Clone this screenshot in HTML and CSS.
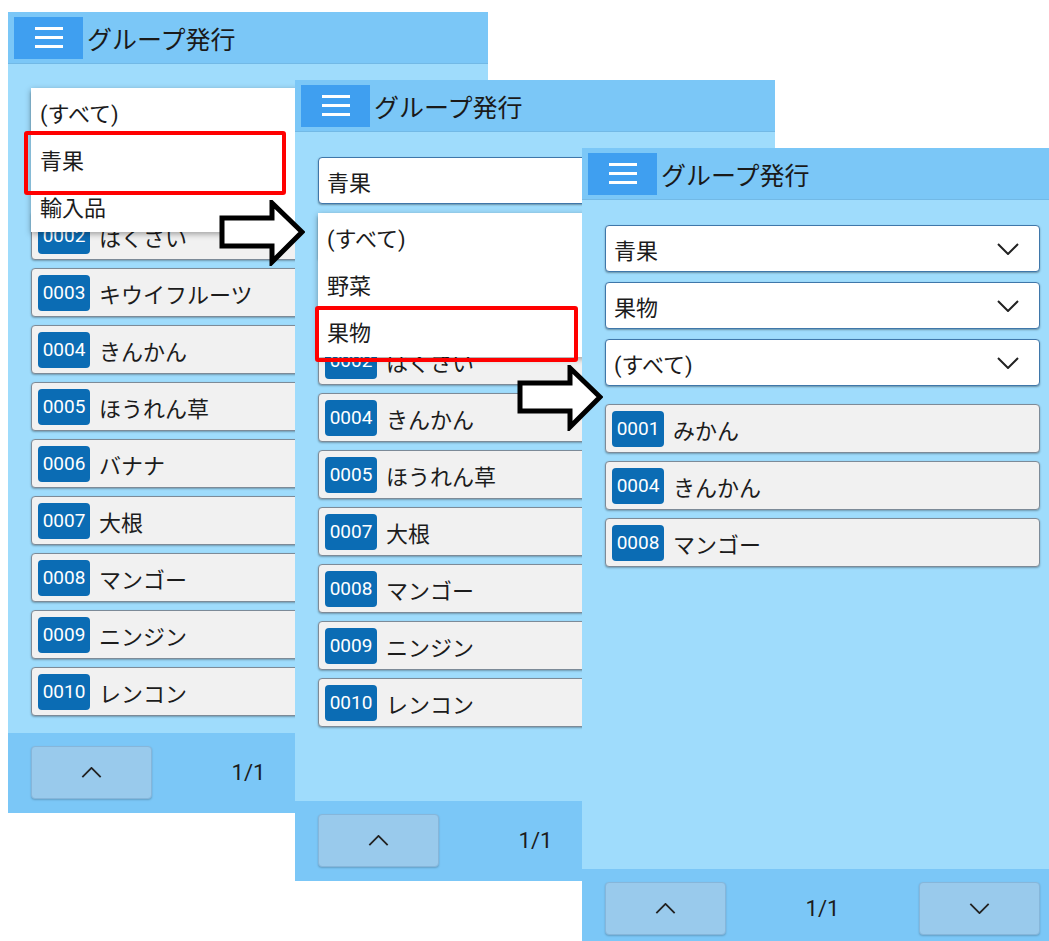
FILE: index.html
```html
<!DOCTYPE html>
<html lang="ja">
<head>
  <meta charset="UTF-8">
  <meta name="viewport" content="width=device-width, initial-scale=1.0">
  <title>グループ発行</title>
  <link rel="stylesheet" href="styles.css">
</head>
<body>

<div class="stage">

  <!-- step 1: first category open -->
  <section class="screen screen-1">
    <header class="bar">
      <button class="menu"><span></span><span></span><span></span></button>
      <h1>グループ発行</h1>
    </header>
    <div class="content">
      <div class="fields">
        <div class="field">
          <div class="select"><svg class="chev" viewBox="0 0 22 12"><path d="M1 1 L11 11 L21 1"/></svg></div>
          <ul class="dropdown">
            <li>(すべて)</li>
            <li>青果</li>
            <li>輸入品</li>
          </ul>
        </div>
      </div>
      <ul class="items">
        <li class="covered"><span class="code">0001</span>みかん</li>
        <li><span class="code">0002</span>はくさい</li>
        <li><span class="code">0003</span>キウイフルーツ</li>
        <li><span class="code">0004</span>きんかん</li>
        <li><span class="code">0005</span>ほうれん草</li>
        <li><span class="code">0006</span>バナナ</li>
        <li><span class="code">0007</span>大根</li>
        <li><span class="code">0008</span>マンゴー</li>
        <li><span class="code">0009</span>ニンジン</li>
        <li><span class="code">0010</span>レンコン</li>
      </ul>
    </div>
    <footer class="pager">
      <button class="page-btn"><svg class="chev" viewBox="0 0 22 12"><path d="M1 11 L11 1 L21 11"/></svg></button>
      <span class="count">1/1</span>
      <button class="page-btn"><svg class="chev" viewBox="0 0 22 12"><path d="M1 1 L11 11 L21 1"/></svg></button>
    </footer>
  </section>

  <!-- step 2: sub category open -->
  <section class="screen screen-2">
    <header class="bar">
      <button class="menu"><span></span><span></span><span></span></button>
      <h1>グループ発行</h1>
    </header>
    <div class="content">
      <div class="fields">
        <div class="field">
          <div class="select">青果<svg class="chev" viewBox="0 0 22 12"><path d="M1 1 L11 11 L21 1"/></svg></div>
        </div>
        <div class="field">
          <div class="select"><svg class="chev" viewBox="0 0 22 12"><path d="M1 1 L11 11 L21 1"/></svg></div>
          <ul class="dropdown">
            <li>(すべて)</li>
            <li>野菜</li>
            <li>果物</li>
          </ul>
        </div>
      </div>
      <ul class="items">
        <li class="covered"><span class="code">0001</span>みかん</li>
        <li><span class="code">0002</span>はくさい</li>
        <li><span class="code">0004</span>きんかん</li>
        <li><span class="code">0005</span>ほうれん草</li>
        <li><span class="code">0007</span>大根</li>
        <li><span class="code">0008</span>マンゴー</li>
        <li><span class="code">0009</span>ニンジン</li>
        <li><span class="code">0010</span>レンコン</li>
      </ul>
    </div>
    <footer class="pager">
      <button class="page-btn"><svg class="chev" viewBox="0 0 22 12"><path d="M1 11 L11 1 L21 11"/></svg></button>
      <span class="count">1/1</span>
      <button class="page-btn"><svg class="chev" viewBox="0 0 22 12"><path d="M1 1 L11 11 L21 1"/></svg></button>
    </footer>
  </section>

  <!-- step 3: filtered result -->
  <section class="screen screen-3">
    <header class="bar">
      <button class="menu"><span></span><span></span><span></span></button>
      <h1>グループ発行</h1>
    </header>
    <div class="content">
      <div class="fields">
        <div class="field">
          <div class="select">青果<svg class="chev" viewBox="0 0 22 12"><path d="M1 1 L11 11 L21 1"/></svg></div>
        </div>
        <div class="field">
          <div class="select">果物<svg class="chev" viewBox="0 0 22 12"><path d="M1 1 L11 11 L21 1"/></svg></div>
        </div>
        <div class="field">
          <div class="select">(すべて)<svg class="chev" viewBox="0 0 22 12"><path d="M1 1 L11 11 L21 1"/></svg></div>
        </div>
      </div>
      <ul class="items">
        <li><span class="code">0001</span>みかん</li>
        <li><span class="code">0004</span>きんかん</li>
        <li><span class="code">0008</span>マンゴー</li>
      </ul>
    </div>
    <footer class="pager">
      <button class="page-btn"><svg class="chev" viewBox="0 0 22 12"><path d="M1 11 L11 1 L21 11"/></svg></button>
      <span class="count">1/1</span>
      <button class="page-btn"><svg class="chev" viewBox="0 0 22 12"><path d="M1 1 L11 11 L21 1"/></svg></button>
    </footer>
  </section>

  <!-- annotations -->
  <div class="mark mark-1"></div>
  <div class="mark mark-2"></div>

  <svg class="arrow arrow-1" viewBox="0 0 86 66"><polygon points="3,18 53,18 53,3 83,32 53,62 53,46 3,46"/></svg>
  <svg class="arrow arrow-2" viewBox="0 0 86 66"><polygon points="3,18 53,18 53,3 83,32 53,62 53,46 3,46"/></svg>

</div>

</body>
</html>
```

FILE: styles.css
```css
* {
  box-sizing: border-box;
}
html, body {
  margin: 0;
  padding: 0;
  background: #fff;
}
body {
  width: 1049px;
  height: 941px;
  overflow: hidden;
  font-family: Roboto, "Noto Sans CJK JP", sans-serif;
  color: #1c1c1c;
}
ul {
  list-style: none;
  margin: 0;
  padding: 0;
}
button {
  font: inherit;
  color: inherit;
  padding: 0;
  cursor: pointer;
}

.stage {
  position: relative;
  width: 1049px;
  height: 941px;
}

/* each phone screen is a window placed on the canvas */
.screen {
  position: absolute;
  width: 480px;
  height: 801px;
  display: flex;
  flex-direction: column;
  background: #9fdcfc;
  overflow: hidden;
}
.screen-1 { left: 8px; top: 12px; z-index: 1; }
.screen-2 { left: 295px; top: 80px; z-index: 2; }
.screen-3 { left: 582px; top: 148px; z-index: 3; }

.bar {
  height: 52px;
  flex: none;
  display: flex;
  align-items: center;
  background: #7bc7f7;
  border-bottom: 1px solid #72b9e6;
}
.menu {
  width: 69px;
  height: 42px;
  margin-left: 6px;
  border: none;
  background: #3f9ff0;
  display: flex;
  flex-direction: column;
  align-items: center;
  justify-content: center;
  gap: 6px;
}
.menu span {
  display: block;
  width: 28px;
  height: 3px;
  background: #fff;
}
.bar h1 {
  margin: 0 0 0 4px;
  font-size: 25px;
  font-weight: normal;
  color: #1a1a1a;
}

.content {
  flex: 1;
  padding: 25px 22px 0 23px;
}
.fields {
  display: flex;
  flex-direction: column;
  gap: 10px;
}
.field {
  position: relative;
}
.select {
  height: 47px;
  background: #fff;
  border: 1px solid #3f77aa;
  border-radius: 4px;
  box-shadow: 0 1px 2px rgba(0,0,0,0.35);
  display: flex;
  align-items: center;
  justify-content: space-between;
  padding: 0 20px 0 8px;
  font-size: 22px;
}
.select .chev {
  width: 22px;
  height: 12px;
  margin-left: auto;
}
.chev path {
  fill: none;
  stroke: #222;
  stroke-width: 2;
}

.dropdown {
  position: absolute;
  top: -1px;
  left: 0;
  right: 0;
  z-index: 2;
  padding-top: 3px;
  background: #fff;
  box-shadow: 0 2px 6px rgba(0,0,0,0.35);
}
.dropdown li {
  height: 47px;
  line-height: 47px;
  padding-left: 9px;
  font-size: 22px;
}

.items {
  margin-top: 18px;
  display: flex;
  flex-direction: column;
  gap: 8px;
}
.items li {
  height: 49px;
  background: #f1f1f1;
  border: 1px solid #7d8b98;
  border-radius: 4px;
  box-shadow: 0 1px 2px rgba(0,0,0,0.3);
  display: flex;
  align-items: center;
  padding-left: 6px;
  font-size: 22px;
}
/* row fully hidden behind an open dropdown */
.items li.covered {
  visibility: hidden;
}
.code {
  width: 52px;
  height: 36px;
  margin-right: 9px;
  border-radius: 4px;
  background: #0b6cb4;
  color: #fff;
  font-size: 19px;
  display: flex;
  align-items: center;
  justify-content: center;
}

.pager {
  height: 80px;
  flex: none;
  background: #7bc7f7;
  display: flex;
  align-items: flex-start;
  padding: 13px 22px 0 23px;
}
.page-btn {
  width: 121px;
  height: 53px;
  background: #99caec;
  border: 1px solid #86b6da;
  border-radius: 4px;
  box-shadow: 0 1px 2px rgba(0,0,0,0.2);
  display: flex;
  align-items: center;
  justify-content: center;
}
.page-btn .chev {
  width: 21px;
  height: 11px;
}
.count {
  flex: 1;
  text-align: center;
  line-height: 53px;
  font-size: 22px;
  color: #1c1c1c;
}

/* red highlight boxes and step arrows drawn over the screens */
.mark {
  position: absolute;
  border: 4px solid #ff0000;
  border-radius: 3px;
  z-index: 5;
}
.mark-1 { left: 24px; top: 131px; width: 262px; height: 64px; }
.mark-2 { left: 315px; top: 306px; width: 263px; height: 56px; }

.arrow {
  position: absolute;
  width: 86px;
  height: 66px;
  z-index: 6;
}
.arrow polygon {
  fill: #fff;
  stroke: #000;
  stroke-width: 5;
  stroke-linejoin: miter;
}
.arrow-1 { left: 219px; top: 200px; }
.arrow-2 { left: 517px; top: 365px; }
```
